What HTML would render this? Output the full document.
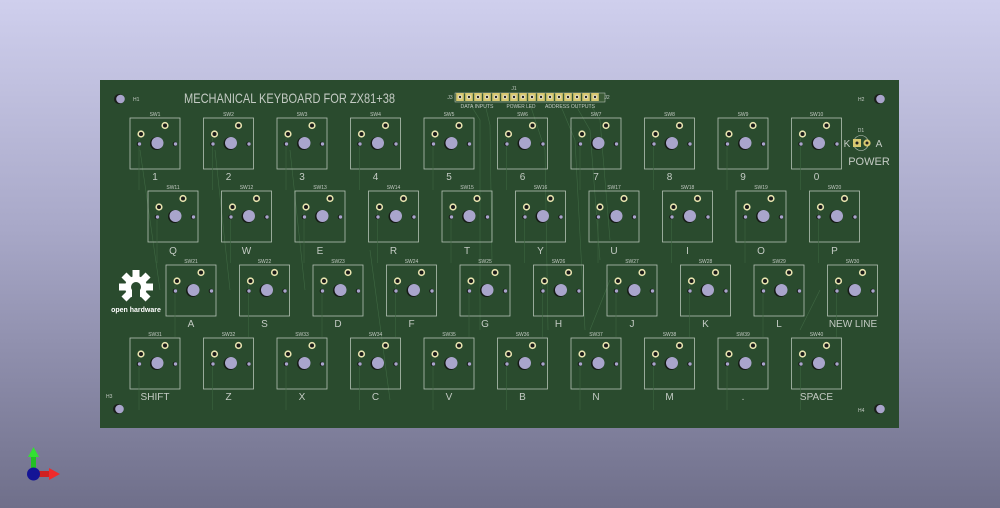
<!DOCTYPE html>
<html><head><meta charset="utf-8"><style>
html,body{margin:0;padding:0;width:1000px;height:508px;overflow:hidden}
body{background:linear-gradient(#cfcfed 0%,#a8a8c8 45%,#6f6f8a 100%)}
svg{position:absolute;left:0;top:0}
text{font-family:"Liberation Sans",sans-serif;fill:#c4cbc4}
.t{font-size:10px;text-anchor:middle}
.s{font-size:5px;text-anchor:middle}
</style></head><body>
<svg width="1000" height="508" viewBox="0 0 1000 508">
<defs>
<g id="sw">
<rect x="0" y="0" width="50" height="51" fill="none" stroke="#b5c2b5" stroke-width="0.8"/>
<line x1="9" y1="20" x2="9" y2="72" stroke="#3d6440" stroke-width="0.6"/>
<circle cx="26.5" cy="25.5" r="6.5" fill="#151a15"/>
<circle cx="27.5" cy="25" r="6" fill="#a9a5cc"/>
<circle cx="9" cy="26" r="2.3" fill="#151a15"/><circle cx="9.5" cy="26" r="1.7" fill="#a9a5cc"/>
<circle cx="45" cy="26" r="2.3" fill="#151a15"/><circle cx="45.5" cy="26" r="1.7" fill="#a9a5cc"/>
<circle cx="11" cy="16" r="3.6" fill="#e8e4b0"/><circle cx="11" cy="16" r="2" fill="#1a1a1a"/>
<circle cx="35" cy="7.5" r="3.6" fill="#e8e4b0"/><circle cx="35" cy="7.5" r="2" fill="#1a1a1a"/>
</g>
<g id="mh"><circle cx="-1" cy="0" r="5" fill="#1a1d1a"/><circle cx="0.5" cy="0" r="4.3" fill="#a9a5cc"/></g>
<g id="pin"><rect x="-3.8" y="-4" width="7.6" height="8" fill="#d8c870"/><circle cx="0" cy="0" r="2.2" fill="#e8e4c8"/><circle cx="0" cy="0" r="1.2" fill="#2a2a2a"/></g>
</defs>
<rect x="100" y="80" width="799" height="348" fill="#2a4b2e"/>
<g stroke="#3f6843" stroke-width="0.6" fill="none">
<path d="M470 104 L480 120 L480 330 M485 104 L490 125 L492 260 M530 104 L545 150 L548 330 M560 104 L575 140 L585 330 M575 104 L590 130 L600 260 M590 104 L600 120 L610 240"/>
<path d="M140 150 L160 290 M215 150 L230 290 M290 150 L305 290 M370 250 L390 400 M610 280 L590 330 M820 290 L800 330"/>
</g>
<use href="#mh" x="120" y="99"/><use href="#mh" x="880" y="99"/><use href="#mh" x="119" y="409"/><use href="#mh" x="880" y="409"/>
<text x="133" y="101" style="font-size:5px">H1</text>
<text x="858" y="101" style="font-size:5px">H2</text>
<text x="106" y="398" style="font-size:5px">H3</text>
<text x="858" y="412" style="font-size:5px">H4</text>
<text x="184" y="103" style="font-size:14px" textLength="211" lengthAdjust="spacingAndGlyphs">MECHANICAL KEYBOARD FOR ZX81+38</text>
<rect x="455" y="93" width="150" height="9" fill="#3a5a36" stroke="#c9d0c9" stroke-width="0.5"/>
<g>
<use href="#pin" x="460" y="97"/><use href="#pin" x="469" y="97"/><use href="#pin" x="478" y="97"/><use href="#pin" x="487" y="97"/><use href="#pin" x="496" y="97"/><use href="#pin" x="505" y="97"/><use href="#pin" x="514" y="97"/><use href="#pin" x="523" y="97"/><use href="#pin" x="532" y="97"/><use href="#pin" x="541" y="97"/><use href="#pin" x="550" y="97"/><use href="#pin" x="559" y="97"/><use href="#pin" x="568" y="97"/><use href="#pin" x="577" y="97"/><use href="#pin" x="586" y="97"/><use href="#pin" x="595" y="97"/>
</g>
<text x="514" y="90" class="s">J1</text>
<text x="450" y="99" class="s">J3</text>
<text x="607" y="99" class="s">J2</text>
<text x="477" y="108" class="s" textLength="33" lengthAdjust="spacingAndGlyphs">DATA INPUTS</text>
<text x="521" y="108" class="s" textLength="29" lengthAdjust="spacingAndGlyphs">POWER LED</text>
<text x="570" y="108" class="s" textLength="50" lengthAdjust="spacingAndGlyphs">ADDRESS OUTPUTS</text>
<circle cx="861" cy="143" r="7.5" fill="none" stroke="#c9d0c9" stroke-width="0.6"/>
<rect x="853" y="139" width="8" height="8" fill="#d8c870"/><circle cx="857" cy="143" r="1.5" fill="#222"/>
<circle cx="867" cy="143" r="3.6" fill="#d8c870"/><circle cx="867" cy="143" r="1.5" fill="#222"/>
<text x="861" y="132" class="s">D1</text>
<text x="847" y="147" class="t">K</text><text x="879" y="147" class="t">A</text>
<text x="869" y="165" class="t" style="font-size:11px">POWER</text>
<g fill="#fff" transform="translate(136,287)">
<circle r="11"/>
<g><rect x="-3.5" y="-17" width="7" height="8"/><rect x="-3.5" y="9" width="7" height="8" transform="rotate(45)"/><rect x="-3.5" y="-17" width="7" height="8" transform="rotate(45)"/><rect x="-3.5" y="-17" width="7" height="8" transform="rotate(90)"/><rect x="-3.5" y="-17" width="7" height="8" transform="rotate(-45)"/><rect x="-3.5" y="-17" width="7" height="8" transform="rotate(-90)"/><rect x="-3.5" y="9" width="7" height="8" transform="rotate(-45)"/></g>
<circle r="5" fill="#2a4b2e"/><rect x="-4" y="0" width="8" height="12" fill="#2a4b2e"/>
</g>
<text x="136" y="312" style="font-size:7px;text-anchor:middle;fill:#fff;font-weight:bold">open hardware</text>
<g>
<use href="#sw" x="130" y="118"/><use href="#sw" x="203.5" y="118"/><use href="#sw" x="277" y="118"/><use href="#sw" x="350.5" y="118"/><use href="#sw" x="424" y="118"/><use href="#sw" x="497.5" y="118"/><use href="#sw" x="571" y="118"/><use href="#sw" x="644.5" y="118"/><use href="#sw" x="718" y="118"/><use href="#sw" x="791.5" y="118"/>
<use href="#sw" x="148" y="191"/><use href="#sw" x="221.5" y="191"/><use href="#sw" x="295" y="191"/><use href="#sw" x="368.5" y="191"/><use href="#sw" x="442" y="191"/><use href="#sw" x="515.5" y="191"/><use href="#sw" x="589" y="191"/><use href="#sw" x="662.5" y="191"/><use href="#sw" x="736" y="191"/><use href="#sw" x="809.5" y="191"/>
<use href="#sw" x="166" y="265"/><use href="#sw" x="239.5" y="265"/><use href="#sw" x="313" y="265"/><use href="#sw" x="386.5" y="265"/><use href="#sw" x="460" y="265"/><use href="#sw" x="533.5" y="265"/><use href="#sw" x="607" y="265"/><use href="#sw" x="680.5" y="265"/><use href="#sw" x="754" y="265"/><use href="#sw" x="827.5" y="265"/>
<use href="#sw" x="130" y="338"/><use href="#sw" x="203.5" y="338"/><use href="#sw" x="277" y="338"/><use href="#sw" x="350.5" y="338"/><use href="#sw" x="424" y="338"/><use href="#sw" x="497.5" y="338"/><use href="#sw" x="571" y="338"/><use href="#sw" x="644.5" y="338"/><use href="#sw" x="718" y="338"/><use href="#sw" x="791.5" y="338"/>
</g>
<g>
<text class="s" x="155" y="116">SW1</text><text class="s" x="228.5" y="116">SW2</text><text class="s" x="302" y="116">SW3</text><text class="s" x="375.5" y="116">SW4</text><text class="s" x="449" y="116">SW5</text><text class="s" x="522.5" y="116">SW6</text><text class="s" x="596" y="116">SW7</text><text class="s" x="669.5" y="116">SW8</text><text class="s" x="743" y="116">SW9</text><text class="s" x="816.5" y="116">SW10</text>
<text class="s" x="173" y="189">SW11</text><text class="s" x="246.5" y="189">SW12</text><text class="s" x="320" y="189">SW13</text><text class="s" x="393.5" y="189">SW14</text><text class="s" x="467" y="189">SW15</text><text class="s" x="540.5" y="189">SW16</text><text class="s" x="614" y="189">SW17</text><text class="s" x="687.5" y="189">SW18</text><text class="s" x="761" y="189">SW19</text><text class="s" x="834.5" y="189">SW20</text>
<text class="s" x="191" y="263">SW21</text><text class="s" x="264.5" y="263">SW22</text><text class="s" x="338" y="263">SW23</text><text class="s" x="411.5" y="263">SW24</text><text class="s" x="485" y="263">SW25</text><text class="s" x="558.5" y="263">SW26</text><text class="s" x="632" y="263">SW27</text><text class="s" x="705.5" y="263">SW28</text><text class="s" x="779" y="263">SW29</text><text class="s" x="852.5" y="263">SW30</text>
<text class="s" x="155" y="336">SW31</text><text class="s" x="228.5" y="336">SW32</text><text class="s" x="302" y="336">SW33</text><text class="s" x="375.5" y="336">SW34</text><text class="s" x="449" y="336">SW35</text><text class="s" x="522.5" y="336">SW36</text><text class="s" x="596" y="336">SW37</text><text class="s" x="669.5" y="336">SW38</text><text class="s" x="743" y="336">SW39</text><text class="s" x="816.5" y="336">SW40</text>
</g>
<g>
<text class="t" x="155" y="180">1</text><text class="t" x="228.5" y="180">2</text><text class="t" x="302" y="180">3</text><text class="t" x="375.5" y="180">4</text><text class="t" x="449" y="180">5</text><text class="t" x="522.5" y="180">6</text><text class="t" x="596" y="180">7</text><text class="t" x="669.5" y="180">8</text><text class="t" x="743" y="180">9</text><text class="t" x="816.5" y="180">0</text>
<text class="t" x="173" y="254">Q</text><text class="t" x="246.5" y="254">W</text><text class="t" x="320" y="254">E</text><text class="t" x="393.5" y="254">R</text><text class="t" x="467" y="254">T</text><text class="t" x="540.5" y="254">Y</text><text class="t" x="614" y="254">U</text><text class="t" x="687.5" y="254">I</text><text class="t" x="761" y="254">O</text><text class="t" x="834.5" y="254">P</text>
<text class="t" x="191" y="327">A</text><text class="t" x="264.5" y="327">S</text><text class="t" x="338" y="327">D</text><text class="t" x="411.5" y="327">F</text><text class="t" x="485" y="327">G</text><text class="t" x="558.5" y="327">H</text><text class="t" x="632" y="327">J</text><text class="t" x="705.5" y="327">K</text><text class="t" x="779" y="327">L</text><text class="t" x="853" y="327">NEW LINE</text>
<text class="t" x="155" y="400">SHIFT</text><text class="t" x="228.5" y="400">Z</text><text class="t" x="302" y="400">X</text><text class="t" x="375.5" y="400">C</text><text class="t" x="449" y="400">V</text><text class="t" x="522.5" y="400">B</text><text class="t" x="596" y="400">N</text><text class="t" x="669.5" y="400">M</text><text class="t" x="743" y="400">.</text><text class="t" x="816.5" y="400">SPACE</text>
</g>
<rect x="31" y="455" width="5" height="13" fill="#22c022"/><polygon points="28,457 33.5,447 39,457" fill="#33e033"/>
<rect x="38" y="471" width="12" height="6" fill="#d02020"/><polygon points="49,468 60,474 49,480" fill="#f02a2a"/>
<circle cx="33.5" cy="474" r="6.5" fill="#141496"/>
</svg>
</body></html>
